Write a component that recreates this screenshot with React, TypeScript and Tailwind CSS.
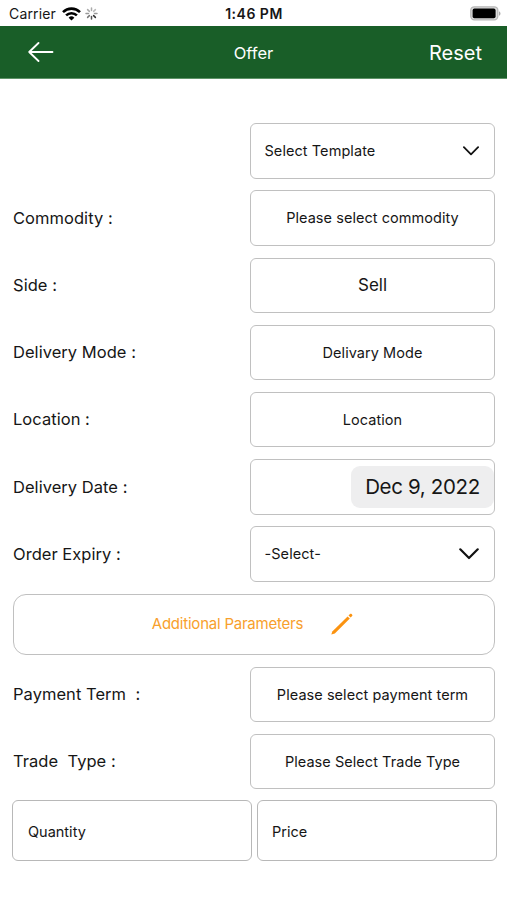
import type { ReactNode } from 'react';

interface FieldRowProps {
  label?: string;
  children: ReactNode;
}

function FieldRow({ label, children }: FieldRowProps) {
  return (
    <div className="flex h-[55.5px] items-center justify-between">
      <span className="whitespace-pre text-[16.5px] tracking-[0.04px]">{label}</span>
      <div className="flex h-[55.5px] w-[245px] items-center rounded-md border-[1.5px] border-[#c0c0c0]">{children}</div>
    </div>
  );
}

function Placeholder({ text }: { text: string }) {
  return <span className="w-full text-center text-[14.5px] tracking-[0.05px]">{text}</span>;
}

function Chevron({ className }: { className: string }) {
  return (
    <svg className={className} viewBox="0 0 18 11" fill="none" stroke="#111" strokeWidth="2" strokeLinecap="round" strokeLinejoin="round">
      <path d="M1 1.2l8 8 8-8" />
    </svg>
  );
}

function StatusBar() {
  return (
    <div className="grid h-[25.5px] grid-cols-3 items-center pl-[9px] pr-[6px] pt-[2px] text-[14px]">
      <div className="flex items-center">
        <span className="tracking-[0.15px]">Carrier</span>
        <svg className="ml-[6px] h-[14px] w-[19px]" viewBox="0 0 19 14" fill="none" stroke="#000" strokeWidth="2.6">
          <path d="M1 5.1a12.2 12.2 0 0 1 17 0" />
          <path d="M4.1 8.4a7.8 7.8 0 0 1 10.8 0" />
          <path d="M9.5 13.6L6.6 10.7a4.2 4.2 0 0 1 5.8 0z" fill="#000" stroke="none" />
        </svg>
        <svg className="ml-[4px] h-[13px] w-[13px]" viewBox="0 0 13 13" fill="none" strokeWidth="1.5" strokeLinecap="round">
          <path d="M6.5 1v2.5" stroke="#aaa" />
          <path d="M10.4 2.6L8.6 4.4" stroke="#bbb" />
          <path d="M12 6.5H9.5" stroke="#999" />
          <path d="M10.4 10.4L8.6 8.6" stroke="#333" />
          <path d="M6.5 12V9.5" stroke="#555" />
          <path d="M2.6 10.4l1.8-1.8" stroke="#777" />
          <path d="M1 6.5h2.5" stroke="#999" />
          <path d="M2.6 2.6l1.8 1.8" stroke="#aaa" />
        </svg>
      </div>
      <span className="-ml-[2px] text-center font-semibold tracking-[0.5px]">1:46 PM</span>
      <svg className="h-[15px] w-[31px] justify-self-end" viewBox="0 0 31 15">
        <rect x="0.8" y="0.8" width="27" height="13" rx="3.5" fill="#ddd" stroke="#b8b8b8" strokeWidth="1.3" />
        <rect x="2.6" y="2.6" width="23" height="9.6" rx="1.8" fill="#000" />
        <path d="M29 5.2c2 .9 2 3.7 0 4.6z" fill="#aaa" />
      </svg>
    </div>
  );
}

function Header() {
  return (
    <header className="grid h-[53.5px] grid-cols-3 items-center border-b border-[#5e9468] bg-[#195e28] px-[25px] text-white">
      <svg className="ml-[3px] h-[20px] w-[26px]" viewBox="0 0 26 20" fill="none" stroke="#fff" strokeWidth="1.8" strokeLinecap="round" strokeLinejoin="round">
        <path d="M24.5 10H1.2M10.5 1L1.2 10l9.3 9" />
      </svg>
      <h1 className="pt-[4px] text-center text-[16.5px]">Offer</h1>
      <button className="justify-self-end pt-[2px] text-[20px]">Reset</button>
    </header>
  );
}

export default function App() {
  return (
    <div className="min-h-[900px] w-[507px] bg-white font-['Inter',sans-serif] text-[#161616]">
      <StatusBar />
      <Header />
      <main className="flex flex-col gap-[11.7px] pl-[13px] pr-[12px] pt-[44.2px]">
        <FieldRow>
          <div className="flex w-full items-center justify-between pl-[13.5px] pr-[15px]">
            <span className="text-[14.5px] tracking-[0.07px]">Select Template</span>
            <Chevron className="h-[10px] w-[16px]" />
          </div>
        </FieldRow>
        <FieldRow label="Commodity :">
          <Placeholder text="Please select commodity" />
        </FieldRow>
        <FieldRow label="Side :">
          <span className="w-full pt-px text-center text-[17px]">Sell</span>
        </FieldRow>
        <FieldRow label="Delivery Mode :">
          <Placeholder text="Delivary Mode" />
        </FieldRow>
        <FieldRow label="Location :">
          <Placeholder text="Location" />
        </FieldRow>
        <FieldRow label="Delivery Date :">
          <div className="ml-auto flex h-[42px] w-[143px] items-center justify-center rounded-[9px] bg-[#eeeeef] pt-px text-[20.5px] tracking-[-0.35px]">Dec 9, 2022</div>
        </FieldRow>
        <FieldRow label="Order Expiry :">
          <div className="flex w-full items-center justify-between pl-[13.5px] pr-[15px]">
            <span className="text-[14.5px] tracking-[0.07px]">-Select-</span>
            <Chevron className="h-[12px] w-[20px]" />
          </div>
        </FieldRow>
        <button className="flex h-[61.5px] items-center justify-center gap-[28px] rounded-[13px] border-[1.5px] border-[#c0c0c0] pr-[3px] text-[#f8a02c]">
          <span className="text-[15px] tracking-[-0.22px]">Additional Parameters</span>
          <svg className="h-[22px] w-[22px]" viewBox="0 0 22 22" fill="#fb9310">
            <path d="M.3 21.6l1-3.2L16.6 3.4l2.2 2.1L3.8 20.5z" />
            <path d="M17.5 2.5L19 1c.6-.5 1.1-.4 1.6.1l.4.4c.5.5.6 1 .1 1.6l-1.5 1.4z" />
          </svg>
        </button>
        <FieldRow label="Payment Term  :">
          <Placeholder text="Please select payment term" />
        </FieldRow>
        <FieldRow label="Trade  Type :">
          <Placeholder text="Please Select Trade Type" />
        </FieldRow>
        <div className="-mt-[0.7px] -mr-[2px] -ml-px grid grid-cols-2 gap-[5px] text-[14.5px]">
          <div className="flex h-[61px] items-center rounded-md border-[1.5px] border-[#b8b8b8] pl-[15px] pt-px">Quantity</div>
          <div className="flex h-[61px] items-center rounded-md border-[1.5px] border-[#b8b8b8] pl-[14px] pt-px">Price</div>
        </div>
      </main>
    </div>
  );
}
